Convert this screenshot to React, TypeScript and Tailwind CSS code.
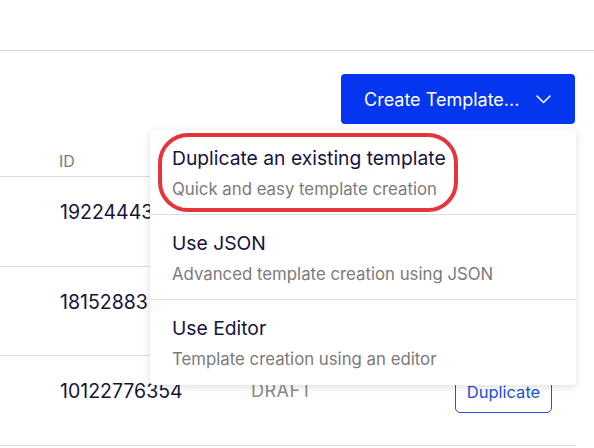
import React from "react";

const rows = [
  { id: "19224443", status: "" },
  { id: "18152883", status: "" },
  { id: "10122776354", status: "DRAFT" },
];

const options = [
  { title: "Duplicate an existing template", sub: "Quick and easy template creation" },
  { title: "Use JSON", sub: "Advanced template creation using JSON" },
  { title: "Use Editor", sub: "Template creation using an editor" },
];

export default function App() {
  return (
    <div
      className="relative w-[594px] h-[448px] overflow-hidden bg-white"
      style={{ fontFamily: "Inter, 'Noto Sans', sans-serif" }}
    >
      {/* page header strip */}
      <div className="h-[51px] border-b border-[#d4d4d4]" />

      {/* toolbar */}
      <div className="flex justify-end pt-[23px] pr-[19px]">
        <button className="flex h-[50px] w-[234px] items-center justify-between rounded-[4px] bg-[#0436f0] px-[23px] text-[18px] text-white">
          <span>Create Template...</span>
          <svg width="15" height="9" viewBox="0 0 15 9" fill="none" className="mr-[1px]">
            <path d="M1 1l6.5 6.5L14 1" stroke="white" strokeWidth="1.6" strokeLinecap="round" strokeLinejoin="round" />
          </svg>
        </button>
      </div>

      {/* table */}
      <div className="w-[576px]">
        <div className="flex h-[53px] items-end border-b border-[#dcdcdc] pb-[3px] pl-[59px] text-[16px] text-[#7a7a7a]">
          ID
        </div>
        {rows.map((r) => (
          <div key={r.id} className="flex h-[89.5px] items-start border-b border-[#dcdcdc] pl-[60px] pr-[24px] pt-[16px]">
            <span className="w-[191px] text-[19.5px] leading-[38px] text-[#15153a]">{r.id}</span>
            <span className="flex-1 text-[18px] leading-[38px] tracking-[0.5px] text-[#8a8a8a]">{r.status}</span>
            <button className="h-[41px] w-[97px] rounded-[5px] border-[1.5px] border-[#2250d8] text-[16.5px] text-[#1d4fd6]">
              Duplicate
            </button>
          </div>
        ))}
      </div>

      {/* dropdown menu */}
      <div className="absolute left-[150px] top-[130px] w-[426px] rounded-[4px] bg-white shadow-[0_2px_8px_rgba(0,0,0,0.13)]">
        {options.map((o, i) => (
          <div
            key={o.title}
            className={`relative flex h-[85px] flex-col pl-[22px] pt-[16px] ${i < 2 ? "border-b border-[#dedede]" : ""}`}
          >
            <span className="text-[19.3px] leading-[24px] text-[#14143c]">{o.title}</span>
            <span className="mt-[9px] text-[16.8px] leading-[20px] text-[#7b7b7b]">{o.sub}</span>
            {i === 0 && (
              <div className="pointer-events-none absolute left-[8px] top-[3px] h-[79px] w-[300px] rounded-[30px] border-[4.5px] border-[#e5343a]" />
            )}
          </div>
        ))}
      </div>
    </div>
  );
}
